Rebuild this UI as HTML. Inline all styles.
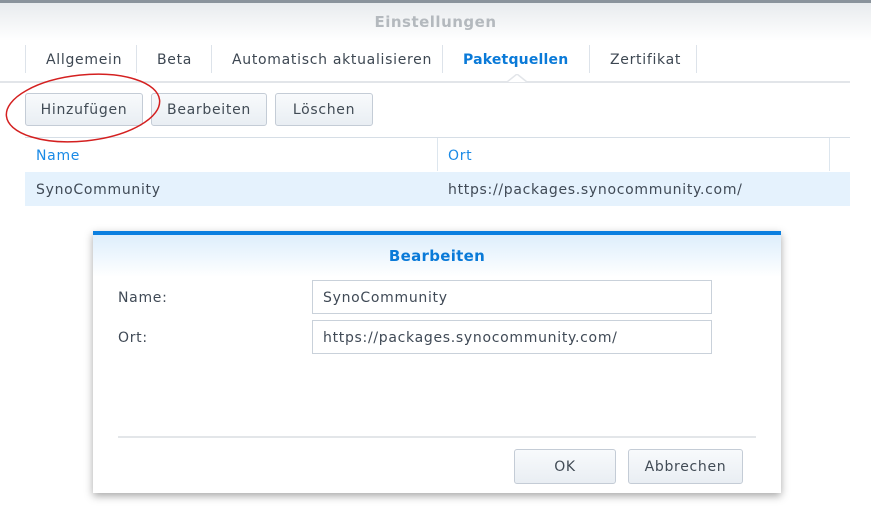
<!DOCTYPE html>
<html><head><meta charset="utf-8"><style>
*{box-sizing:border-box;margin:0;padding:0}
body{width:871px;height:531px;background:#fff;font-family:"DejaVu Sans",sans-serif;font-size:14px;color:#404a56;position:relative;overflow:hidden;letter-spacing:0.7px}
.a{position:absolute;white-space:nowrap}
.btn{position:absolute;border:1px solid #c4ccd6;border-radius:3px;background:linear-gradient(#f8fafc,#e9eef3);text-align:center;line-height:33px;font-size:14px;color:#414b55}
.sep{position:absolute;top:45px;height:28px;width:1px;background:#dde3ea}
.tab{position:absolute;top:52px;font-size:14px;color:#3d4752;white-space:nowrap}
</style></head><body>
<div class="a" style="left:0;top:0;width:871px;height:3px;background:#8a939c"></div>
<div class="a" style="left:0;top:3px;width:871px;height:38px;background:linear-gradient(#e8ebee,#fff)"></div>
<div class="a" style="left:0;top:13px;width:871px;text-align:center;font-weight:bold;font-size:15px;color:#b4b9be;letter-spacing:0.5px">Einstellungen</div>
<div class="sep" style="left:25px"></div><div class="sep" style="left:136px"></div><div class="sep" style="left:211px"></div><div class="sep" style="left:442px"></div><div class="sep" style="left:589px"></div><div class="sep" style="left:696px"></div>
<div class="tab" style="left:46px">Allgemein</div>
<div class="tab" style="left:157px">Beta</div>
<div class="tab" style="left:232px">Automatisch aktualisieren</div>
<div class="tab" style="left:463px;color:#0a7ad8;font-weight:bold;letter-spacing:0.2px">Paketquellen</div>
<div class="tab" style="left:610px">Zertifikat</div>
<div class="a" style="left:0;top:81px;width:850px;height:2px;background:#e2e5e9"></div>
<svg class="a" style="left:507px;top:74px" width="20" height="9"><path d="M0 8 L10 0 L20 8" fill="#fff" stroke="#e2e5e9" stroke-width="1.5"/></svg>
<div class="btn" style="left:25px;top:93px;width:118px;height:33px">Hinzufügen</div>
<div class="btn" style="left:151px;top:93px;width:116px;height:33px">Bearbeiten</div>
<div class="btn" style="left:275px;top:93px;width:98px;height:33px">Löschen</div>
<div class="a" style="left:25px;top:137px;width:825px;height:1px;background:#d6dee6"></div>
<div class="a" style="left:437px;top:138px;width:1px;height:33px;background:#dde6ee"></div>
<div class="a" style="left:829px;top:138px;width:1px;height:33px;background:#dde6ee"></div>
<div class="a" style="left:36px;top:148px;color:#1a8ae6">Name</div>
<div class="a" style="left:448px;top:148px;color:#1a8ae6">Ort</div>
<div class="a" style="left:25px;top:172px;width:825px;height:34px;background:#e5f2fd"></div>
<div class="a" style="left:36px;top:182px">SynoCommunity</div>
<div class="a" style="left:448px;top:182px">https://packages.synocommunity.com/</div>
<svg class="a" style="left:0;top:68px" width="170" height="80"><ellipse cx="83" cy="40" rx="77" ry="33" fill="none" stroke="#d42020" stroke-width="1.5" transform="rotate(-6 83 40)"/></svg>
<div class="a" style="left:93px;top:231px;width:688px;height:262px;background:#fff;box-shadow:0 3px 8px rgba(0,0,0,.35);border-top:4px solid #0a7fe0">
<div style="height:42px;background:linear-gradient(#ddeefc,#fff);text-align:center;padding-top:12px;font-weight:bold;font-size:15px;color:#0a7ad8;letter-spacing:0.3px">Bearbeiten</div>
</div>
<div class="a" style="left:118px;top:290px">Name:</div>
<div class="a" style="left:118px;top:330px">Ort:</div>
<div class="a" style="left:312px;top:280px;width:400px;height:34px;border:1px solid #c9d1da;padding:9px 10px">SynoCommunity</div>
<div class="a" style="left:312px;top:320px;width:400px;height:34px;border:1px solid #c9d1da;padding:9px 10px">https://packages.synocommunity.com/</div>
<div class="a" style="left:118px;top:436px;width:638px;height:2px;background:#e3e6e9"></div>
<div class="btn" style="left:514px;top:449px;width:102px;height:35px;line-height:34px">OK</div>
<div class="btn" style="left:628px;top:449px;width:115px;height:35px;line-height:34px">Abbrechen</div>
</body></html>
